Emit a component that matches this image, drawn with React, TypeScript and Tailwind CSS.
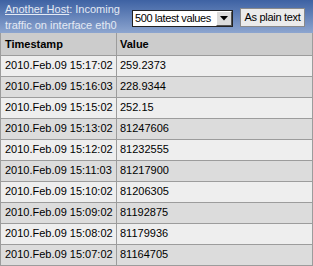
import React from 'react'

const rows = [
    ['2010.Feb.09 15:17:02', '259.2373'],
    ['2010.Feb.09 15:16:03', '228.9344'],
    ['2010.Feb.09 15:15:02', '252.15'],
    ['2010.Feb.09 15:13:02', '81247606'],
    ['2010.Feb.09 15:12:02', '81232555'],
    ['2010.Feb.09 15:11:03', '81217900'],
    ['2010.Feb.09 15:10:02', '81206305'],
    ['2010.Feb.09 15:09:02', '81192875'],
    ['2010.Feb.09 15:08:02', '81179936'],
    ['2010.Feb.09 15:07:02', '81164705'],
]

export default function App() {
    return (
        <div className="w-[313px] h-[266px] overflow-hidden bg-[#eeeeee] text-[11px] text-black" style={{ fontFamily: '"Liberation Sans", Arial, sans-serif' }}>
            <div className="h-[33px] flex items-start bg-gradient-to-b from-[#3e62a3] to-[#8da5cf] pl-[5px]">
                <p className="w-[124px] shrink-0 mt-[1px] leading-[16px] text-[#e4eaf4]">
                    <span className="underline">Another Host</span>: Incoming
                    <br />
                    traffic on interface eth0
                </p>
                <div className="ml-[3px] mt-[10px] w-[101px] h-[17px] shrink-0 flex items-center bg-white border border-[#222] pl-[2px] text-[11px] tracking-[-0.4px] whitespace-nowrap overflow-hidden">
                    <span className="flex-1 leading-[15px]">500 latest values</span>
                    <div className="w-[16px] h-[15px] shrink-0 flex items-center justify-center bg-[#dcdcdc] border-t border-l border-t-white border-l-white border-r border-b border-r-[#555] border-b-[#555]">
                        <svg width="8" height="5" viewBox="0 0 8 5"><polygon points="0,0 8,0 4,4.5" fill="#000" /></svg>
                    </div>
                </div>
                <div className="ml-[7px] mt-[8px] h-[19px] w-[65px] shrink-0 flex items-center justify-center bg-[#ebebeb] border border-[#8a8a8a] text-[11px] tracking-[-0.3px] leading-none whitespace-nowrap">
                    As plain text
                </div>
            </div>
            <table className="w-[313px] border-collapse table-fixed">
                <colgroup>
                    <col className="w-[116px]" />
                    <col />
                </colgroup>
                <thead>
                    <tr className="h-[22px] bg-[#cccccc]">
                        <th className="border border-t-0 border-[#9c9c9c] text-left font-bold pl-[4px] text-[11px]">Timestamp</th>
                        <th className="border border-t-0 border-[#9c9c9c] text-left font-bold pl-[3px] text-[11px]">Value</th>
                    </tr>
                </thead>
                <tbody>
                    {rows.map((r, i) => (
                        <tr key={i} className={i % 2 === 0 ? 'h-[21px] bg-[#eeeeee]' : 'h-[21px] bg-[#dcdcdc]'}>
                            <td className="border border-[#9c9c9c] pl-[4px] whitespace-nowrap">{r[0]}</td>
                            <td className="border border-[#9c9c9c] pl-[3px]">{r[1]}</td>
                        </tr>
                    ))}
                </tbody>
            </table>
        </div>
    )
}
